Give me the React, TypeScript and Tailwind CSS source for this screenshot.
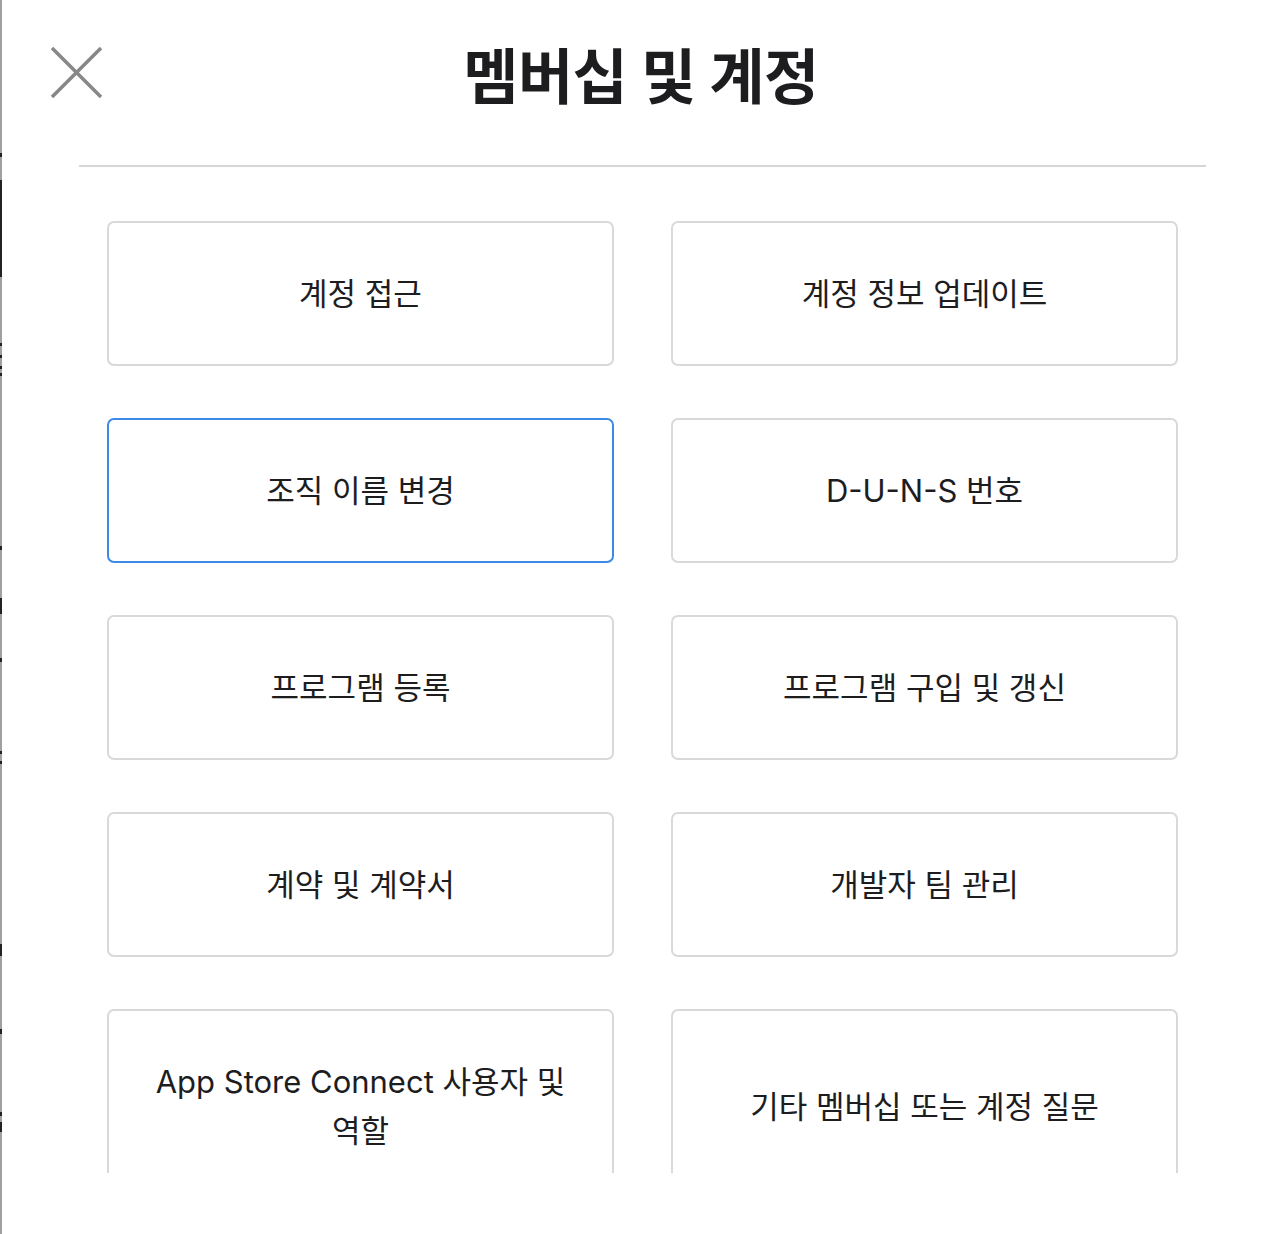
const items = [
  "계정 접근",
  "계정 정보 업데이트",
  "조직 이름 변경",
  "D-U-N-S 번호",
  "프로그램 등록",
  "프로그램 구입 및 갱신",
  "계약 및 계약서",
  "개발자 팀 관리",
  "App Store Connect 사용자 및 역할",
  "기타 멤버십 또는 계정 질문",
];

// marks on the page edge peeking out behind the sheet
const edgeMarks = [
  [153, 4],
  [180, 97],
  [343, 3],
  [355, 3],
  [366, 3],
  [373, 3],
  [546, 4],
  [598, 16],
  [658, 4],
  [751, 3],
  [761, 3],
  [944, 12],
  [1029, 5],
  [1112, 4],
  [1122, 10],
];

export default function App() {
  return (
    <div
      className="relative flex h-[1234px] w-[1280px] overflow-hidden bg-white text-[#1d1d1f]"
      style={{ fontFamily: '"Inter", "Noto Sans CJK KR", sans-serif' }}
    >
      <div className="relative w-[2px] shrink-0 bg-[#a0a0a0]">
        {edgeMarks.map(([top, h]) => (
          <div
            key={top}
            className="absolute left-0 w-[2px] bg-[#222]"
            style={{ top, height: h }}
          />
        ))}
      </div>

      <div className="relative flex flex-1 flex-col">
        <button
          aria-label="닫기"
          className="absolute left-[48px] top-[46px] h-[53px] w-[53px]"
        >
          <svg viewBox="0 0 53 53" className="h-full w-full">
            <path
              d="M2 2 L51 51 M51 2 L2 51"
              stroke="#878787"
              strokeWidth="3.5"
              fill="none"
            />
          </svg>
        </button>

        <div className="flex h-[165px] items-center justify-center pb-[12px]">
          <h1 className="text-[60px] font-bold tracking-[-0.5px] text-[#1d1d1f]">
            멤버십 및 계정
          </h1>
        </div>

        <div className="ml-[77px] mr-[74px] h-[2px] bg-[#d6d6d6]" />

        <div className="h-[1006px] overflow-hidden pl-[105px] pr-[102px] pt-[54px]">
          <div className="grid grid-cols-2 gap-x-[57px] gap-y-[52px]">
            {items.map((label, i) => (
              <button
                key={label}
                className={
                  "flex min-h-[145px] items-center justify-center break-keep rounded-[7px] border-2 px-[38px] py-[46px] text-center text-[31px] leading-[49px] " +
                  (i === 2 ? "border-[#3d8ae6]" : "border-[#d9d9d9]")
                }
              >
                {label}
              </button>
            ))}
          </div>
        </div>
      </div>
    </div>
  );
}
